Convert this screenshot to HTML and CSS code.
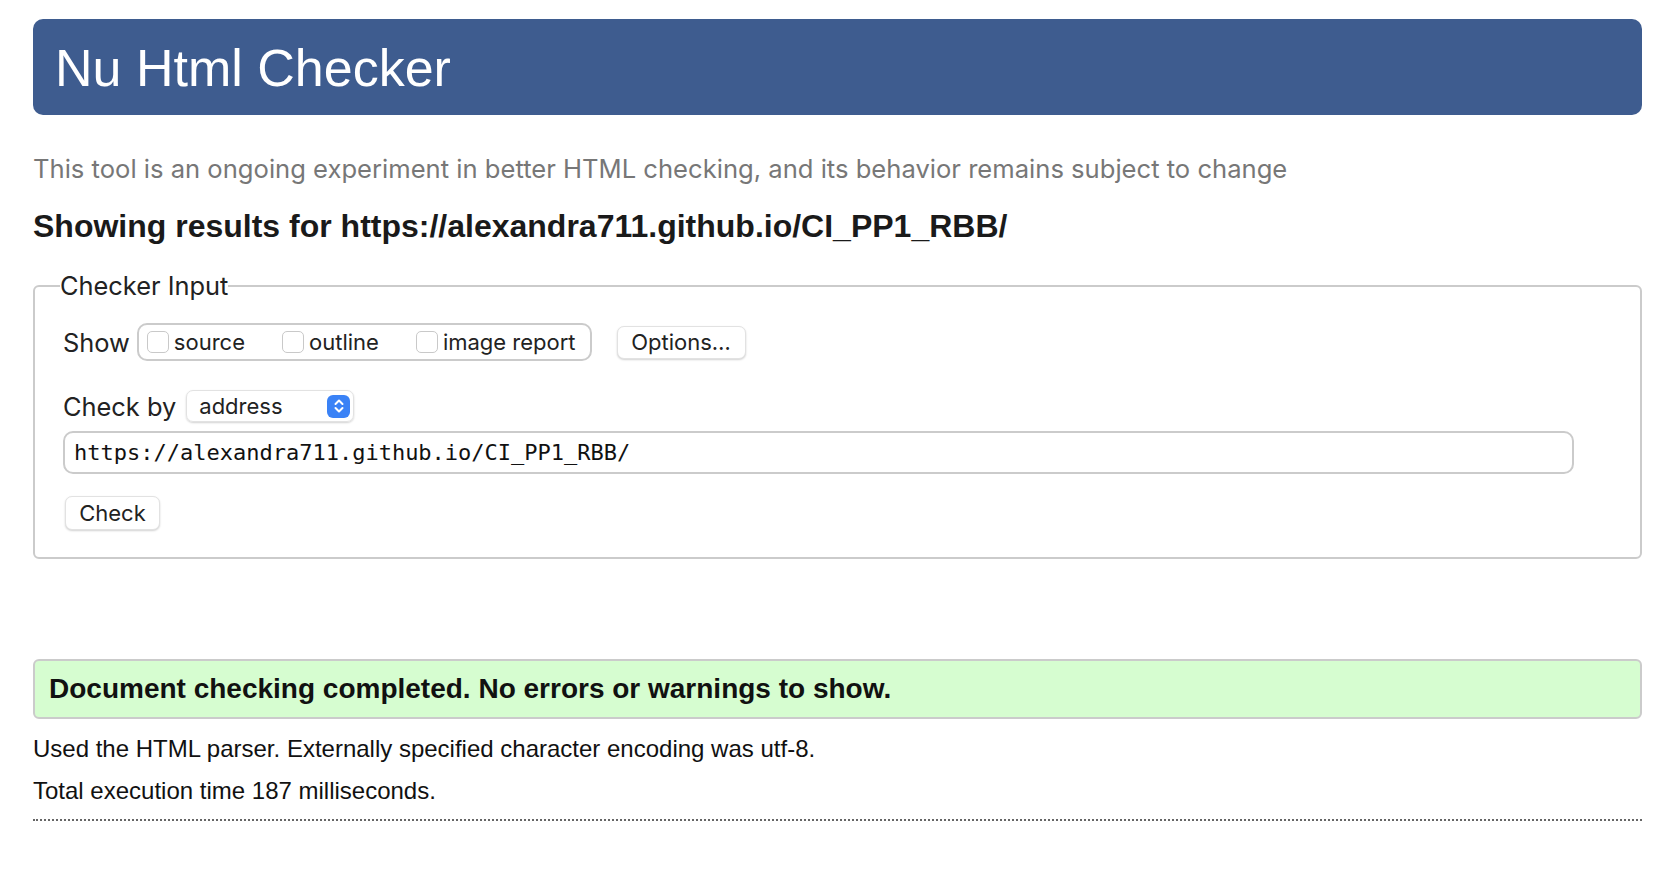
FILE: index.html
```html
<!DOCTYPE html>
<html lang="en">
<head>
<meta charset="utf-8">
<title>Nu Html Checker</title>
<link rel="stylesheet" href="styles.css">
</head>
<body>
<div class="page">
  <header class="banner"><h1 class="title">Nu Html Checker</h1></header>
  <p class="intro">This tool is an ongoing experiment in better HTML checking, and its behavior remains subject to change</p>
  <h2 class="showing">Showing results for https://alexandra711.github.io/CI_PP1_RBB/</h2>
  <fieldset class="checker">
    <legend class="legend">Checker Input</legend>
    <div class="row row-show">
      <span class="label">Show</span>
      <div class="group">
        <label class="opt"><span class="box"></span>source</label>
        <label class="opt"><span class="box"></span>outline</label>
        <label class="opt"><span class="box"></span>image report</label>
      </div>
      <span class="btn btn-options">Options…</span>
    </div>
    <div class="row row-by">
      <span class="label">Check by</span>
      <div class="select">
        <span class="select-text">address</span>
        <span class="select-arrow"><svg width="14" height="18" viewBox="0 0 14 18"><path d="M3.5 7 L7 3.5 L10.5 7 M3.5 11 L7 14.5 L10.5 11" fill="none" stroke="#fff" stroke-width="2" stroke-linecap="round" stroke-linejoin="round"/></svg></span>
      </div>
    </div>
    <div class="url">https://alexandra711.github.io/CI_PP1_RBB/</div>
    <div class="row row-check"><span class="btn btn-check">Check</span></div>
  </fieldset>
  <div class="success">Document checking completed. No errors or warnings to show.</div>
  <p class="meta meta-first">Used the HTML parser. Externally specified character encoding was utf-8.</p>
  <p class="meta meta-second">Total execution time 187 milliseconds.</p>
  <hr class="dots">
</div>
</body>
</html>
```
FILE: styles.css
```css
html, body {
  margin: 0;
  padding: 0;
  background: #fff;
}
body {
  font-family: "Liberation Sans", Arial, sans-serif;
  color: #111;
}
.page {
  padding: 19px 32px 0 33px;
}
.banner {
  background: #3e5c8f;
  border-radius: 10px;
  height: 96px;
  display: flex;
  align-items: flex-start;
}
.title {
  margin: 0;
  padding: 19px 0 0 22px;
  font-family: "Liberation Sans", Arial, sans-serif;
  font-weight: 400;
  font-size: 52px;
  line-height: 60px;
  color: #fff;
}
.intro {
  margin: 39px 0 0 0;
  font-family: Inter, "Liberation Sans", sans-serif;
  font-size: 25.6px;
  line-height: 30px;
  color: #777;
}
.showing {
  margin: 23px 0 0 0;
  font-family: "Liberation Sans", Arial, sans-serif;
  font-weight: 700;
  font-size: 32px;
  line-height: 38px;
  color: #1a1a1a;
}
.checker {
  margin: 26px 0 0 0;
  padding: 0 25px 27px 25px;
  border: 2px solid #cbcbcb;
  border-radius: 6px;
  font-family: Inter, "Liberation Sans", sans-serif;
  color: #222;
}
.legend {
  padding: 0;
  font-size: 25.4px;
  line-height: 30px;
}
.row {
  display: flex;
  align-items: center;
  margin-left: 3px;
}
.label {
  font-size: 25.4px;
}
.row-show {
  margin-top: 22px;
  height: 38px;
}
.group {
  margin-left: 7px;
  height: 38px;
  box-sizing: border-box;
  border: 2px solid #cbcbcb;
  border-radius: 10px;
  display: flex;
  align-items: center;
  padding: 0 14px 0 8px;
  gap: 37px;
}
.opt {
  display: flex;
  align-items: center;
  font-size: 22px;
  color: #222;
}
.box {
  width: 22px;
  height: 22px;
  border: 1px solid #c9c9c9;
  border-radius: 5px;
  background: #fff;
  margin-right: 5px;
  box-sizing: border-box;
}
.btn {
  display: inline-flex;
  align-items: center;
  justify-content: center;
  background: #fff;
  border: 1px solid #e2e2e2;
  border-radius: 7px;
  box-shadow: 0 1px 2px rgba(0,0,0,0.18);
  font-size: 22px;
  color: #222;
  box-sizing: border-box;
}
.btn-options {
  margin-left: 25px;
  width: 129px;
  height: 33px;
}
.row-by {
  margin-top: 29px;
  height: 32px;
}
.select {
  margin-left: 10px;
  width: 168px;
  height: 32px;
  box-sizing: border-box;
  border: 1px solid #e2e2e2;
  border-radius: 7px;
  box-shadow: 0 1px 2px rgba(0,0,0,0.18);
  display: flex;
  align-items: center;
  justify-content: space-between;
  padding: 0 3px 0 12px;
  font-size: 22px;
}
.select-arrow {
  width: 23px;
  height: 23px;
  background: #3a82f6;
  border-radius: 6px;
  display: flex;
  align-items: center;
  justify-content: center;
}
.url {
  margin: 9px 0 0 3px;
  height: 43px;
  width: 1511px;
  box-sizing: border-box;
  border: 2px solid #cbcbcb;
  border-radius: 10px;
  padding: 0 9px;
  display: flex;
  align-items: center;
  font-family: "DejaVu Sans Mono", monospace;
  font-size: 22px;
  color: #111;
}
.row-check {
  margin-top: 22px;
  margin-left: 5px;
}
.btn-check {
  width: 95px;
  height: 34px;
}
.success {
  margin-top: 100px;
  height: 60px;
  box-sizing: border-box;
  background: #d6fdd0;
  border: 2px solid #cbcbcb;
  border-radius: 6px;
  padding: 0 14px;
  display: flex;
  align-items: center;
  font-weight: 700;
  font-size: 28px;
  color: #111;
}
.meta {
  margin: 14px 0 0 0;
  font-size: 24px;
  line-height: 28px;
  color: #111;
}
.meta-first {
  margin-top: 16px;
}
.dots {
  margin: 14px 0 0 0;
  border: 0;
  border-top: 2px dotted #666;
  height: 0;
}
```
